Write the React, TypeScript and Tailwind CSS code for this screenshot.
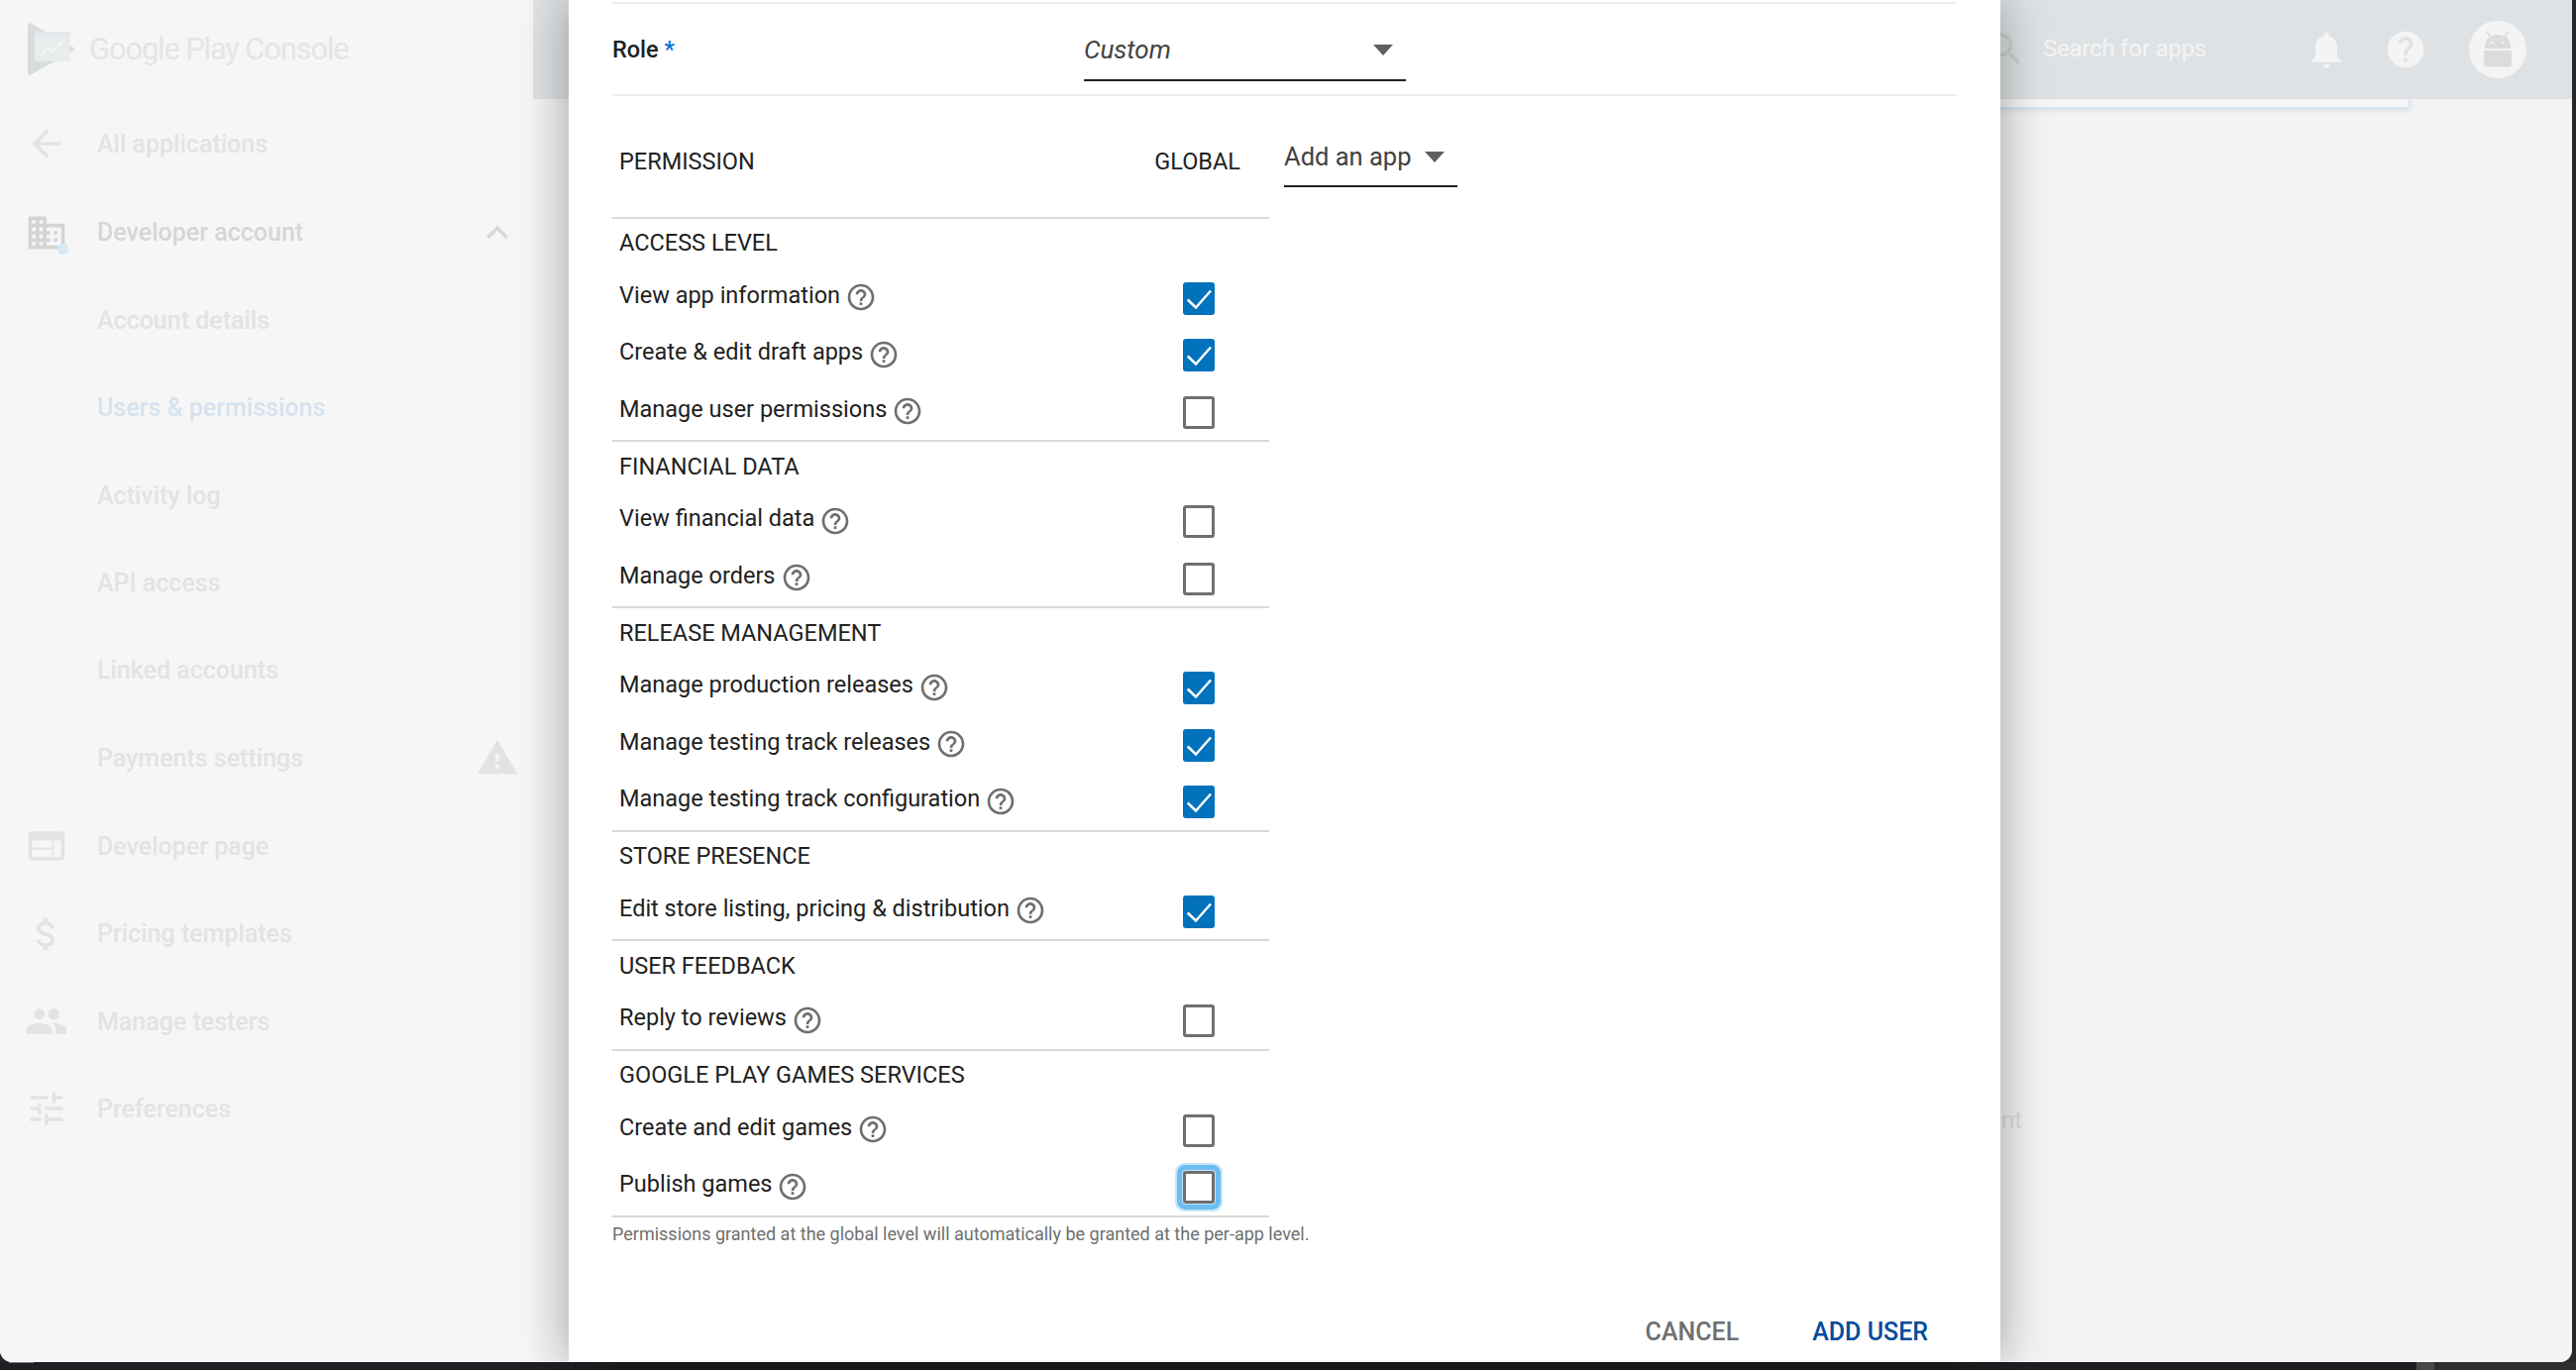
import React from "react";

const P = {
  arrow: "M20 11H7.83l5.59-5.59L12 4l-8 8 8 8 1.41-1.41L7.83 13H20v-2z",
  chevron: "M12 8l-6 6 1.41 1.41L12 10.83l4.59 4.58L18 14z",
  domain:
    "M12 7V3H2v18h20V7H12zM6 19H4v-2h2v2zm0-4H4v-2h2v2zm0-4H4V9h2v2zm0-4H4V5h2v2zm4 12H8v-2h2v2zm0-4H8v-2h2v2zm0-4H8V9h2v2zm0-4H8V5h2v2zm10 12h-8v-2h2v-2h-2v-2h2v-2h-2V9h8v10zm-2-8h-2v2h2v-2zm0 4h-2v2h2v-2z",
  warning: "M1 21h22L12 2 1 21zm12-3h-2v-2h2v2zm0-4h-2v-4h2v4z",
  web: "M20 4H4c-1.1 0-1.99.9-1.99 2L2 18c0 1.1.9 2 2 2h16c1.1 0 2-.9 2-2V6c0-1.1-.9-2-2-2zm-5 14H4v-4h11v4zm0-5H4V9h11v4zm5 5h-4V9h4v9z",
  money:
    "M11.8 10.9c-2.27-.59-3-1.2-3-2.15 0-1.09 1.01-1.85 2.7-1.85 1.78 0 2.44.85 2.5 2.1h2.21c-.07-1.72-1.12-3.3-3.21-3.81V3h-3v2.16c-1.94.42-3.5 1.68-3.5 3.61 0 2.31 1.91 3.46 4.7 4.13 2.5.6 3 1.48 3 2.41 0 .69-.49 1.79-2.7 1.79-2.06 0-2.87-.92-2.98-2.1h-2.2c.12 2.19 1.76 3.42 3.68 3.83V21h3v-2.15c1.95-.37 3.5-1.5 3.5-3.55 0-2.84-2.43-3.81-4.7-4.4z",
  people:
    "M16 11c1.66 0 2.99-1.34 2.99-3S17.66 5 16 5c-1.66 0-3 1.34-3 3s1.34 3 3 3zm-8 0c1.66 0 2.99-1.34 2.99-3S9.66 5 8 5C6.34 5 5 6.34 5 8s1.34 3 3 3zm0 2c-2.33 0-7 1.17-7 3.5V19h14v-2.5c0-2.33-4.67-3.5-7-3.5zm8 0c-.29 0-.62.02-.97.05 1.16.84 1.97 1.97 1.97 3.45V19h6v-2.5c0-2.33-4.67-3.5-7-3.5z",
  tune: "M3 17v2h6v-2H3zM3 5v2h10V5H3zm10 16v-2h8v-2h-8v-2h-2v6h2zM7 9v2H3v2h4v2h2V9H7zm14 4v-2H11v2h10zm-6-4h2V7h4V5h-4V3h-2v6z",
  bell: "M12 22c1.1 0 2-.9 2-2h-4c0 1.1.89 2 2 2zm6-6v-5c0-3.07-1.64-5.64-4.5-6.32V4c0-.83-.67-1.5-1.5-1.5s-1.5.67-1.5 1.5v.68C7.63 5.36 6 7.92 6 11v5l-2 2v1h16v-1l-2-2z",
  help: "M12 2C6.48 2 2 6.48 2 12s4.48 10 10 10 10-4.48 10-10S17.52 2 12 2zm1 17h-2v-2h2v2zm2.07-7.75l-.9.92C13.45 12.9 13 13.5 13 15h-2v-.5c0-1.1.45-2.1 1.17-2.83l1.24-1.26c.37-.36.59-.86.59-1.41 0-1.1-.9-2-2-2s-2 .9-2 2H8c0-2.21 1.79-4 4-4s4 1.79 4 4c0 .88-.36 1.68-.93 2.25z",
  helpOutline:
    "M11 18h2v-2h-2v2zm1-16C6.48 2 2 6.48 2 12s4.48 10 10 10 10-4.48 10-10S17.52 2 12 2zm0 18c-4.41 0-8-3.59-8-8s3.59-8 8-8 8 3.59 8 8-3.59 8-8 8zm0-14c-2.21 0-4 1.79-4 4h2c0-1.1.9-2 2-2s2 .9 2 2c0 2-3 1.75-3 5h2c0-2.25 3-2.5 3-5 0-2.21-1.79-4-4-4z",
  search:
    "M15.5 14h-.79l-.28-.27C15.41 12.59 16 11.11 16 9.5 16 5.91 13.09 3 9.5 3S3 5.91 3 9.5 5.91 16 9.5 16c1.61 0 3.09-.59 4.23-1.57l.27.28v.79l5 4.99L20.49 19l-4.99-5zm-6 0C7.01 14 5 11.99 5 9.5S7.01 5 9.5 5 14 7.01 14 9.5 11.99 14 9.5 14z",
};

function Icon({ d, size, className }: { d: string; size: number; className: string }) {
  return (
    <svg width={size} height={size} viewBox="0 0 24 24" className={className} fill="currentColor">
      <path d={d} />
    </svg>
  );
}

function NavItem({
  label,
  icon,
  text = "text-[#e3e3e3]",
  iconClass = "text-[#e3e3e3]",
  right,
  badge,
}: {
  label: string;
  icon?: string;
  text?: string;
  iconClass?: string;
  right?: React.ReactNode;
  badge?: boolean;
}) {
  return (
    <div className="flex h-[88.4px] items-center pr-[14px]">
      <div className="relative h-[44px] w-[98px] shrink-0 pl-[25px]">
        {icon && <Icon d={icon} size={44} className={iconClass} />}
        {badge && <span className="absolute left-[58px] top-[33px] h-[11px] w-[11px] rounded-full bg-[#d5e8f5]" />}
      </div>
      <span className={`flex-1 pt-[1px] text-[25px] font-medium ${text}`}>{label}</span>
      {right}
    </div>
  );
}

function Check({ on, focus }: { on?: boolean; focus?: boolean }) {
  const box = on ? (
    <div className="h-[33px] w-[32px] rounded-[3px] bg-[#0272bd]">
      <svg width="32" height="33" viewBox="0 0 32 33" fill="none" stroke="#fff" strokeWidth="2.5">
        <path d="M4.7 17.500l8.300 8L28 8.500" />
      </svg>
    </div>
  ) : (
    <div className="h-[33px] w-[32px] rounded-[3px] border-[3px] border-[#6f6f6f] bg-white" />
  );
  if (!focus) return box;
  return <div className="rounded-[3px] shadow-[0_0_0_1px_#c9e6f9,0_0_0_6px_#6cbdf2,0_0_0_8px_#c9e6f9]">{box}</div>;
}

function Row({ label, on, focus }: { label: string; on?: boolean; focus?: boolean }) {
  return (
    <div className="flex h-[57.5px] items-center justify-between pl-[7px] pr-[55px] pt-[2px]">
      <div className="flex items-center gap-[5px] pb-[6px]">
        <span className="text-[23.5px] text-[#212121]">{label}</span>
        <Icon d={P.helpOutline} size={32} className="translate-y-[2px] text-[#6f6f6f]" />
      </div>
      <Check on={on} focus={focus} />
    </div>
  );
}

const sections: { title: string; rows: { label: string; on?: boolean; focus?: boolean }[] }[] = [
  {
    title: "ACCESS LEVEL",
    rows: [
      { label: "View app information", on: true },
      { label: "Create & edit draft apps", on: true },
      { label: "Manage user permissions" },
    ],
  },
  {
    title: "FINANCIAL DATA",
    rows: [{ label: "View financial data" }, { label: "Manage orders" }],
  },
  {
    title: "RELEASE MANAGEMENT",
    rows: [
      { label: "Manage production releases", on: true },
      { label: "Manage testing track releases", on: true },
      { label: "Manage testing track configuration", on: true },
    ],
  },
  {
    title: "STORE PRESENCE",
    rows: [{ label: "Edit store listing, pricing & distribution", on: true }],
  },
  { title: "USER FEEDBACK", rows: [{ label: "Reply to reviews" }] },
  {
    title: "GOOGLE PLAY GAMES SERVICES",
    rows: [{ label: "Create and edit games" }, { label: "Publish games", focus: true }],
  },
];

function Logo() {
  return (
    <svg width="50" height="54" viewBox="0 0 50 54" className="shrink-0">
      <path d="M1 2.5C1 .6 2.5 -.3 4 .6L46.5 24.5c1.7 1 1.7 3 0 4L4 52.5c-1.600 1-3 0-3-2z" fill="#d9dcdd" />
      <path d="M8 9h35.5v30L8 38.5z" fill="#e3e8ea" />
      <path d="M8 14h35.5v25L8 38.5z" fill="#e8eced" />
      <path d="M14.5 32l7-7 5 4 7-7.5 3-2" fill="none" stroke="#f6f6f6" strokeWidth="2" />
    </svg>
  );
}

function Android() {
  return (
    <svg width="32" height="36" viewBox="0 0 32 36" fill="#dcdcdc">
      <path d="M3 15C3 7 9 3 16 3s13 4 13 12v2H3z" />
      <path d="M2 19h28v14c0 1.5-1 2.5-2.5 2.5h-23C3 35.500 2 34.500 2 33z" />
      <path d="M5 0l4 5M27 0l-4 5" stroke="#dcdcdc" strokeWidth="2" />
      <circle cx="10.500" cy="11" r="1.300" fill="#f4f4f4" />
      <circle cx="21.500" cy="11" r="1.300" fill="#f4f4f4" />
    </svg>
  );
}

export default function App() {
  return (
    <div className="relative h-[1383px] w-[2600px] overflow-hidden bg-[#26282b] font-['Roboto',sans-serif]">
      <div className="flex h-[1375px] w-[2596px] overflow-hidden rounded-b-[12px] border-b border-white bg-[#f3f3f3]">
        <aside className="flex w-[538px] shrink-0 flex-col bg-[#f6f6f6]">
          <div className="flex h-[101px] shrink-0 items-center gap-[13px] border-b border-[#f1f1f1] pl-[27px]">
            <Logo />
            <span className="text-[31px] tracking-[-1.2px] text-[#e3e5e6]">Google Play Console</span>
          </div>
          <div className="border-b border-[#f1f1f1]">
            <NavItem label="All applications" icon={P.arrow} />
          </div>
          <NavItem
            label="Developer account"
            icon={P.domain}
            badge
            text="text-[#d6d6d6]"
            iconClass="text-[#d4d4d4]"
            right={<Icon d={P.chevron} size={44} className="text-[#d8d8d8]" />}
          />
          <NavItem label="Account details" />
          <NavItem label="Users & permissions" text="text-[#d6e3ef]" />
          <NavItem label="Activity log" />
          <NavItem label="API access" />
          <NavItem label="Linked accounts" />
          <div className="border-b border-[#f1f1f1]">
            <NavItem label="Payments settings" right={<Icon d={P.warning} size={44} className="text-[#e3e3e3]" />} />
          </div>
          <NavItem label="Developer page" icon={P.web} />
          <NavItem label="Pricing templates" icon={P.money} />
          <NavItem label="Manage testers" icon={P.people} />
          <NavItem label="Preferences" icon={P.tune} />
        </aside>
        <main className="flex min-w-0 flex-1 flex-col">
          <header className="flex h-[100px] shrink-0 items-center justify-end bg-[#dfe2e4] pr-[46px]">
            <div className="mr-[99px] flex items-center gap-[16px]">
              <Icon d={P.search} size={44} className="text-[#cfd2d3]" />
              <span className="text-[23.5px] text-[#f4f4f4]">Search for apps</span>
            </div>
            <Icon d={P.bell} size={44} className="text-[#f4f4f4]" />
            <Icon d={P.help} size={44} className="ml-[36px] text-[#f4f4f4]" />
            <div className="ml-[42px] flex h-[58px] w-[58px] items-center justify-center rounded-full bg-[#f4f4f4]">
              <Android />
            </div>
          </header>
          <div className="flex-1">
            <div className="ml-[420px] h-[10px] w-[1475px] rounded-br-[3px] border-b-2 border-r-2 border-[#d9e5f2] bg-[#f6f6f6] shadow-[0_2px_4px_rgba(0,0,0,0.08)]" />
            <div className="ml-[1482px] mt-[1003px] w-[40px] text-[24px] text-[#dddddd]">nt</div>
          </div>
        </main>
      </div>
      <div className="flex h-[8px] items-start bg-[#1d1f22]">
        <div className="ml-[9px] h-[1px] w-[25px] bg-[#77797c]" />
        <div className="flex-1" />
        <div className="h-full w-[18px] bg-[#46484a]" />
        <div className="h-full w-[143px] bg-[#2e2f31]" />
      </div>

      <div className="absolute left-[574px] top-0 flex h-[1375px] w-[1445px] flex-col bg-white pl-[44px] pr-[44px] shadow-[0_0_46px_rgba(0,0,0,0.35)]">
        <div className="mt-[2px] h-[2px] shrink-0 bg-[#eeeeee]" />
        <div className="flex h-[93px] shrink-0 items-start border-b-2 border-[#eeeeee]">
          <div className="mt-[29px] w-[476px] text-[23.5px] font-medium text-[#212121]">
            Role <span className="text-[#0272d8]">*</span>
          </div>
          <div className="flex h-[78px] w-[325px] items-center justify-between border-b-2 border-[#212121] pr-[13px] pt-[16px]">
            <span className="text-[26px] italic text-[#424242]">Custom</span>
            <span className="h-0 w-0 border-x-[10px] border-t-[11px] border-x-transparent border-t-[#5f5f5f]" />
          </div>
        </div>
        <div className="flex items-start">
          <div className="w-[663px] shrink-0">
            <div className="flex h-[123.5px] items-center justify-between border-b-2 border-[#d9d9d9] pl-[7px] pr-[29px] pt-[12px]">
              <span className="text-[23.5px] text-[#212121]">PERMISSION</span>
              <span className="text-[23.5px] text-[#212121]">GLOBAL</span>
            </div>
            {sections.map((s) => (
              <div key={s.title} className="border-b-2 border-[#d9d9d9]">
                <div className="flex h-[51px] items-center pl-[7px] text-[23.5px] text-[#212121]">{s.title}</div>
                {s.rows.map((r) => (
                  <Row key={r.label} {...r} />
                ))}
              </div>
            ))}
            <p className="mt-[3px] whitespace-nowrap text-[18px] text-[#6f6f6f]">
              Permissions granted at the global level will automatically be granted at the per-app level.
            </p>
          </div>
          <div className="ml-[15px] flex h-[92px] w-[175px] items-center justify-between border-b-2 border-[#212121] pr-[13px] pt-[32px]">
            <span className="text-[25.5px] text-[#424242]">Add an app</span>
            <span className="h-0 w-0 border-x-[10px] border-t-[11px] border-x-transparent border-t-[#5f5f5f]" />
          </div>
        </div>
        <div className="mt-auto flex items-center justify-end gap-[74px] pb-[12px] pr-[29px]">
          <span className="text-[25px] font-medium text-[#6f6f6f]">CANCEL</span>
          <span className="text-[25px] font-medium text-[#004c9a]">ADD USER</span>
        </div>
      </div>
    </div>
  );
}
